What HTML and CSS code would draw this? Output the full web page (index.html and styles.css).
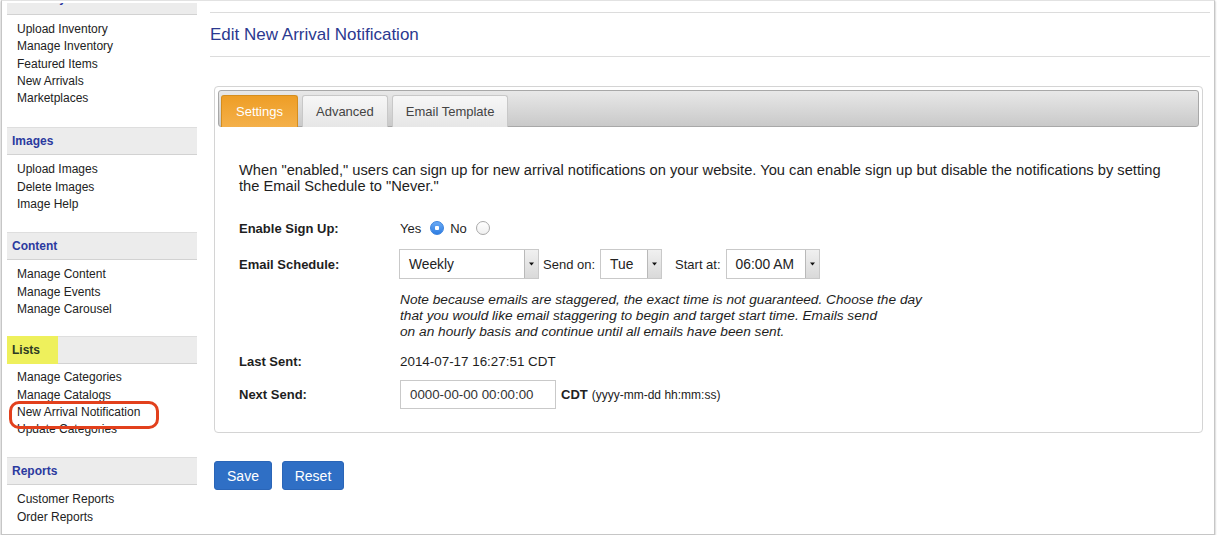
FILE: index.html
```html
<!DOCTYPE html>
<html>
<head>
<meta charset="utf-8">
<title>Edit New Arrival Notification</title>
<link rel="stylesheet" href="styles.css">
</head>
<body>
<div class="frame">
  <aside class="sidebar">
    <section class="sec sec-first">
      <div class="sec-h">Inventory</div>
      <ul>
        <li>Upload Inventory</li>
        <li>Manage Inventory</li>
        <li>Featured Items</li>
        <li>New Arrivals</li>
        <li>Marketplaces</li>
      </ul>
    </section>
    <section class="sec">
      <div class="sec-h">Images</div>
      <ul>
        <li>Upload Images</li>
        <li>Delete Images</li>
        <li>Image Help</li>
      </ul>
    </section>
    <section class="sec">
      <div class="sec-h">Content</div>
      <ul>
        <li>Manage Content</li>
        <li>Manage Events</li>
        <li>Manage Carousel</li>
      </ul>
    </section>
    <section class="sec sec-lists">
      <div class="sec-h"><span class="mark">Lists</span></div>
      <ul>
        <li>Manage Categories</li>
        <li>Manage Catalogs</li>
        <li class="ringed">New Arrival Notification</li>
        <li>Update Categories</li>
      </ul>
    </section>
    <section class="sec">
      <div class="sec-h">Reports</div>
      <ul>
        <li>Customer Reports</li>
        <li>Order Reports</li>
      </ul>
    </section>
  </aside>

  <main class="main">
    <h1 class="title">Edit New Arrival Notification</h1>

    <div class="panel">
      <div class="tabbar">
        <div class="tab active">Settings</div>
        <div class="tab">Advanced</div>
        <div class="tab">Email Template</div>
      </div>
      <div class="content">
        <p class="intro">When "enabled," users can sign up for new arrival notifications on your website. You can enable sign up but disable the notifications by setting the Email Schedule to "Never."</p>

        <div class="row r1">
          <div class="lbl">Enable Sign Up:</div>
          <div class="radios">
            <span>Yes</span><span class="radio on"></span>
            <span class="no">No</span><span class="radio"></span>
          </div>
        </div>

        <div class="row r2">
          <div class="lbl">Email Schedule:</div>
          <span class="select w-weekly"><span class="val">Weekly</span><span class="arrow"><svg width="5" height="4" viewBox="0 0 5 4"><path d="M0 0.5H5L2.5 3.5Z" fill="#111"/></svg></span></span>
          <span class="inl first">Send on:</span>
          <span class="select w-tue"><span class="val">Tue</span><span class="arrow"><svg width="5" height="4" viewBox="0 0 5 4"><path d="M0 0.5H5L2.5 3.5Z" fill="#111"/></svg></span></span>
          <span class="inl second">Start at:</span>
          <span class="select w-time"><span class="val">06:00 AM</span><span class="arrow"><svg width="5" height="4" viewBox="0 0 5 4"><path d="M0 0.5H5L2.5 3.5Z" fill="#111"/></svg></span></span>
        </div>

        <p class="note">Note because emails are staggered, the exact time is not guaranteed. Choose the day<br>that you would like email staggering to begin and target start time. Emails send<br>on an hourly basis and continue until all emails have been sent.</p>

        <div class="row r3">
          <div class="lbl">Last Sent:</div>
          <div class="val-text">2014-07-17 16:27:51 CDT</div>
        </div>

        <div class="row r4">
          <div class="lbl">Next Send:</div>
          <span class="input">0000-00-00 00:00:00</span>
          <span class="cdt">CDT</span>
          <span class="fmt">(yyyy-mm-dd hh:mm:ss)</span>
        </div>
      </div>
    </div>

    <div class="actions">
      <button class="btn save">Save</button>
      <button class="btn reset">Reset</button>
    </div>
  </main>
</div>
</body>
</html>
```

FILE: styles.css
```css
* { box-sizing: border-box; }

html, body {
  margin: 0;
  padding: 0;
  background: #ffffff;
}

body {
  font-family: "Liberation Sans", Arial, Helvetica, sans-serif;
  color: #222222;
  overflow: hidden;
}

.frame {
  margin-left: 1px;
  width: 1214px;
  height: 535px;
  border: 1px solid #c6c6c6;
  border-top-color: #e2e2e2;
  display: flex;
  align-items: flex-start;
  overflow: hidden;
  background: #ffffff;
  box-shadow: 0 1px 2px rgba(0, 0, 0, 0.35);
}

/* ---------- sidebar ---------- */
.sidebar {
  flex: none;
  width: 195px;
  padding-left: 5px;
  margin-top: 2px;
  overflow: hidden;
}

.sec-first {
  margin-top: -16px;
}

.sec-lists {
  margin-top: -1px;
}

.sec-h {
  height: 28px;
  background: #ececec;
  border-top: 1px solid #dedede;
  border-bottom: 1px solid #d2d2d2;
  padding-left: 5px;
  display: flex;
  align-items: center;
  font-size: 12px;
  font-weight: bold;
  color: #2b3a9f;
}

.sec-first .sec-h {
  padding-bottom: 6px;
}

.mark {
  align-self: stretch;
  display: flex;
  align-items: center;
  margin: -1px 0 -1px -5px;
  padding: 0 5px;
  width: 51px;
  background: #eef05c;
  color: #2c3a24;
}

.sec ul {
  list-style: none;
  margin: 0;
  padding: 6px 0 19px 10px;
  font-size: 12px;
  line-height: 17.3px;
  color: #222222;
}

.sec-first ul {
  padding-bottom: 20px;
}

.sec-lists ul {
  padding-top: 5px;
}

.ringed {
  position: relative;
}

.ringed::after {
  content: "";
  position: absolute;
  left: -8px;
  top: -3px;
  width: 144px;
  height: 22px;
  border: 3px solid #e2401c;
  border-radius: 10px;
}

/* ---------- main ---------- */
.main {
  flex: 1;
  padding: 11px 4px 0 13px;
}

.title {
  margin: 0;
  height: 45px;
  border-top: 1px solid #dcdcdc;
  border-bottom: 1px solid #dcdcdc;
  display: flex;
  align-items: center;
  font-size: 17px;
  font-weight: normal;
  color: #2b3990;
}

.panel {
  margin: 29px 7px 0 4px;
  border: 1px solid #d4d4d4;
  border-radius: 4px;
  padding: 3px;
}

.tabbar {
  height: 37px;
  border: 1px solid #a8a8a8;
  border-radius: 3px;
  background: linear-gradient(#e8e8e8, #c9c9c9);
  display: flex;
  align-items: flex-end;
  gap: 4px;
  padding: 0 2px;
}

.tab {
  height: 32px;
  margin-bottom: -1px;
  padding: 0 13px;
  border: 1px solid #c8c8c8;
  border-bottom: none;
  border-radius: 3px 3px 0 0;
  background: linear-gradient(#f7f7f7, #e6e6e6);
  display: flex;
  align-items: center;
  font-size: 13px;
  color: #444444;
}

.tab.active {
  padding: 0 14px;
  background: linear-gradient(#ee9e26, #f4b04a);
  border-color: #d58e1e;
  color: #ffffff;
}

.content {
  padding: 35px 24px 20px 21px;
  font-size: 13px;
}

.intro {
  margin: 0;
  font-size: 14.7px;
  line-height: 16px;
  color: #1e1e1e;
}

.row {
  display: flex;
  align-items: center;
}

.lbl {
  flex: none;
  width: 161px;
  font-weight: bold;
  color: #1e1e1e;
}

.r1 { margin-top: 22px; height: 24px; }
.r2 { margin-top: 9px; height: 30px; }
.r3 { margin-top: 11px; height: 20px; }
.r4 { margin-top: 9px; height: 29px; }

.radios {
  display: flex;
  align-items: center;
  color: #1e1e1e;
}

.radio {
  width: 14px;
  height: 14px;
  margin-left: 9px;
  border-radius: 50%;
  border: 1px solid #a9a9a9;
  background: linear-gradient(#ffffff, #f0f0f0);
}

.radio.on {
  border-color: #3a82de;
  background: radial-gradient(circle, #ffffff 0 2px, transparent 2.5px), linear-gradient(#6aaaf4, #2e7de2);
}

.no { margin-left: 6px; }

.select {
  height: 30px;
  border: 1px solid #c9c9c9;
  display: flex;
  align-items: stretch;
  background: #ffffff;
  color: #222222;
}

.select .val {
  flex: 1;
  display: flex;
  align-items: center;
  padding-left: 9px;
  font-size: 13.8px;
}

.select .arrow {
  flex: none;
  width: 14px;
  border-left: 1px solid #b9b9b9;
  background: linear-gradient(#f0f0f0, #d9d9d9);
  display: flex;
  align-items: center;
  justify-content: center;
}

.w-weekly { width: 140px; margin-left: -1px; }
.w-tue { width: 62px; }
.w-time { width: 94px; }

.inl { color: #1e1e1e; }
.inl.first { margin: 0 5px 0 4px; }
.inl.second { margin: 0 5px 0 13px; }

.note {
  margin: 13px 0 0 161px;
  font-style: italic;
  font-size: 13.7px;
  line-height: 16px;
  color: #1e1e1e;
}

.val-text {
  font-size: 13.4px;
  color: #1e1e1e;
}

.input {
  width: 156px;
  height: 29px;
  border: 1px solid #c9c9c9;
  padding-left: 9px;
  display: flex;
  align-items: center;
  font-size: 13.3px;
  color: #333333;
}

.cdt {
  margin-left: 5px;
  font-weight: bold;
}

.fmt {
  margin-left: 4px;
  font-size: 12px;
  color: #222222;
}

.actions {
  margin: 28px 0 0 4px;
  display: flex;
  gap: 10px;
}

.btn {
  height: 29px;
  border: 1px solid #2a65b7;
  border-radius: 3px;
  background: #2f6fc5;
  color: #ffffff;
  font-family: "Liberation Sans", Arial, sans-serif;
  font-size: 14px;
  padding: 0;
}

.btn.save { width: 58px; }
.btn.reset { width: 62px; }
```
